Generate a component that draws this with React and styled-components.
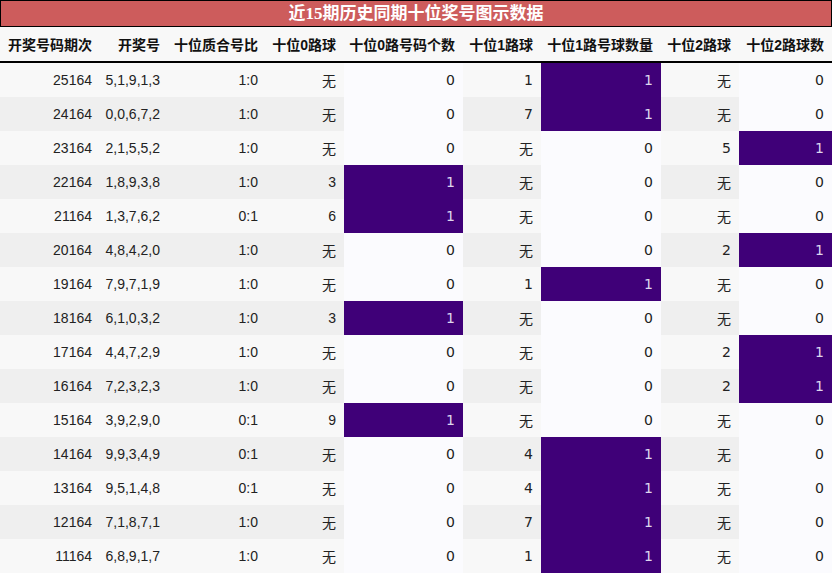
import React from 'react'
import styled, { createGlobalStyle } from 'styled-components'

const Global = createGlobalStyle`
  body {
    margin: 0;
    background: #fff;
    font-family: "Liberation Sans", "Noto Sans CJK SC", sans-serif;
  }
`

const Title = styled.div`
  height: 25px;
  border: 1px solid #000;
  background: #cd5c5c;
  color: #fff;
  font-family: "Liberation Serif", "Noto Sans CJK SC", serif;
  font-weight: bold;
  font-size: 17px;
  line-height: 25px;
  text-align: center;
`

const Table = styled.table`
  width: 832px;
  border-collapse: collapse;
  table-layout: fixed;
  font-size: 14px;
  color: #222;
`

const Th = styled.th`
  height: 34px;
  padding: 0 8px 0 0;
  text-align: right;
  font-weight: bold;
  font-size: 14px;
  color: #111;
  background: #f8f8f8;
  border-bottom: 2px solid #000;
  white-space: nowrap;
`

const Td = styled.td`
  height: 34px;
  padding: 0 8px 0 0;
  text-align: right;
  white-space: nowrap;
  font-family: ${p => p.$dv ? '"DejaVu Sans", "Noto Sans CJK SC", sans-serif' : '"Liberation Sans", "Noto Sans CJK SC", sans-serif'};
  background: ${p => p.$hit ? '#3f0078' : p.$plain ? '#fbfbfe' : p.$odd ? '#efefef' : '#f8f8f8'};
  color: ${p => p.$hit ? '#ddd6ee' : '#222'};
`

const widths = [100, 68, 98, 78, 119, 78, 120, 78, 93]
const heads = ['开奖号码期次', '开奖号', '十位质合号比', '十位0路球', '十位0路号码个数', '十位1路球', '十位1路号球数量', '十位2路球', '十位2路球数']

const rows = [
  ['25164', '5,1,9,1,3', '1:0', '无', 0, '1', 1, '无', 0],
  ['24164', '0,0,6,7,2', '1:0', '无', 0, '7', 1, '无', 0],
  ['23164', '2,1,5,5,2', '1:0', '无', 0, '无', 0, '5', 1],
  ['22164', '1,8,9,3,8', '1:0', '3', 1, '无', 0, '无', 0],
  ['21164', '1,3,7,6,2', '0:1', '6', 1, '无', 0, '无', 0],
  ['20164', '4,8,4,2,0', '1:0', '无', 0, '无', 0, '2', 1],
  ['19164', '7,9,7,1,9', '1:0', '无', 0, '1', 1, '无', 0],
  ['18164', '6,1,0,3,2', '1:0', '3', 1, '无', 0, '无', 0],
  ['17164', '4,4,7,2,9', '1:0', '无', 0, '无', 0, '2', 1],
  ['16164', '7,2,3,2,3', '1:0', '无', 0, '无', 0, '2', 1],
  ['15164', '3,9,2,9,0', '0:1', '9', 1, '无', 0, '无', 0],
  ['14164', '9,9,3,4,9', '0:1', '无', 0, '4', 1, '无', 0],
  ['13164', '9,5,1,4,8', '0:1', '无', 0, '4', 1, '无', 0],
  ['12164', '7,1,8,7,1', '1:0', '无', 0, '7', 1, '无', 0],
  ['11164', '6,8,9,1,7', '1:0', '无', 0, '1', 1, '无', 0],
]

const countCols = [4, 6, 8]

export default function App() {
  return (
    <>
      <Global />
      <Title>近15期历史同期十位奖号图示数据</Title>
      <Table>
        <colgroup>
          {widths.map((w, i) => <col key={i} style={{ width: w }} />)}
        </colgroup>
        <thead>
          <tr>{heads.map(h => <Th key={h}>{h}</Th>)}</tr>
        </thead>
        <tbody>
          {rows.map((r, ri) => (
            <tr key={r[0]}>
              {r.map((v, ci) => {
                const isCount = countCols.includes(ci)
                return (
                  <Td
                    key={ci}
                    $dv={ci >= 4}
                    $odd={ri % 2 === 1}
                    $plain={isCount}
                    $hit={isCount && v === 1}
                  >
                    {v}
                  </Td>
                )
              })}
            </tr>
          ))}
        </tbody>
      </Table>
    </>
  )
}
